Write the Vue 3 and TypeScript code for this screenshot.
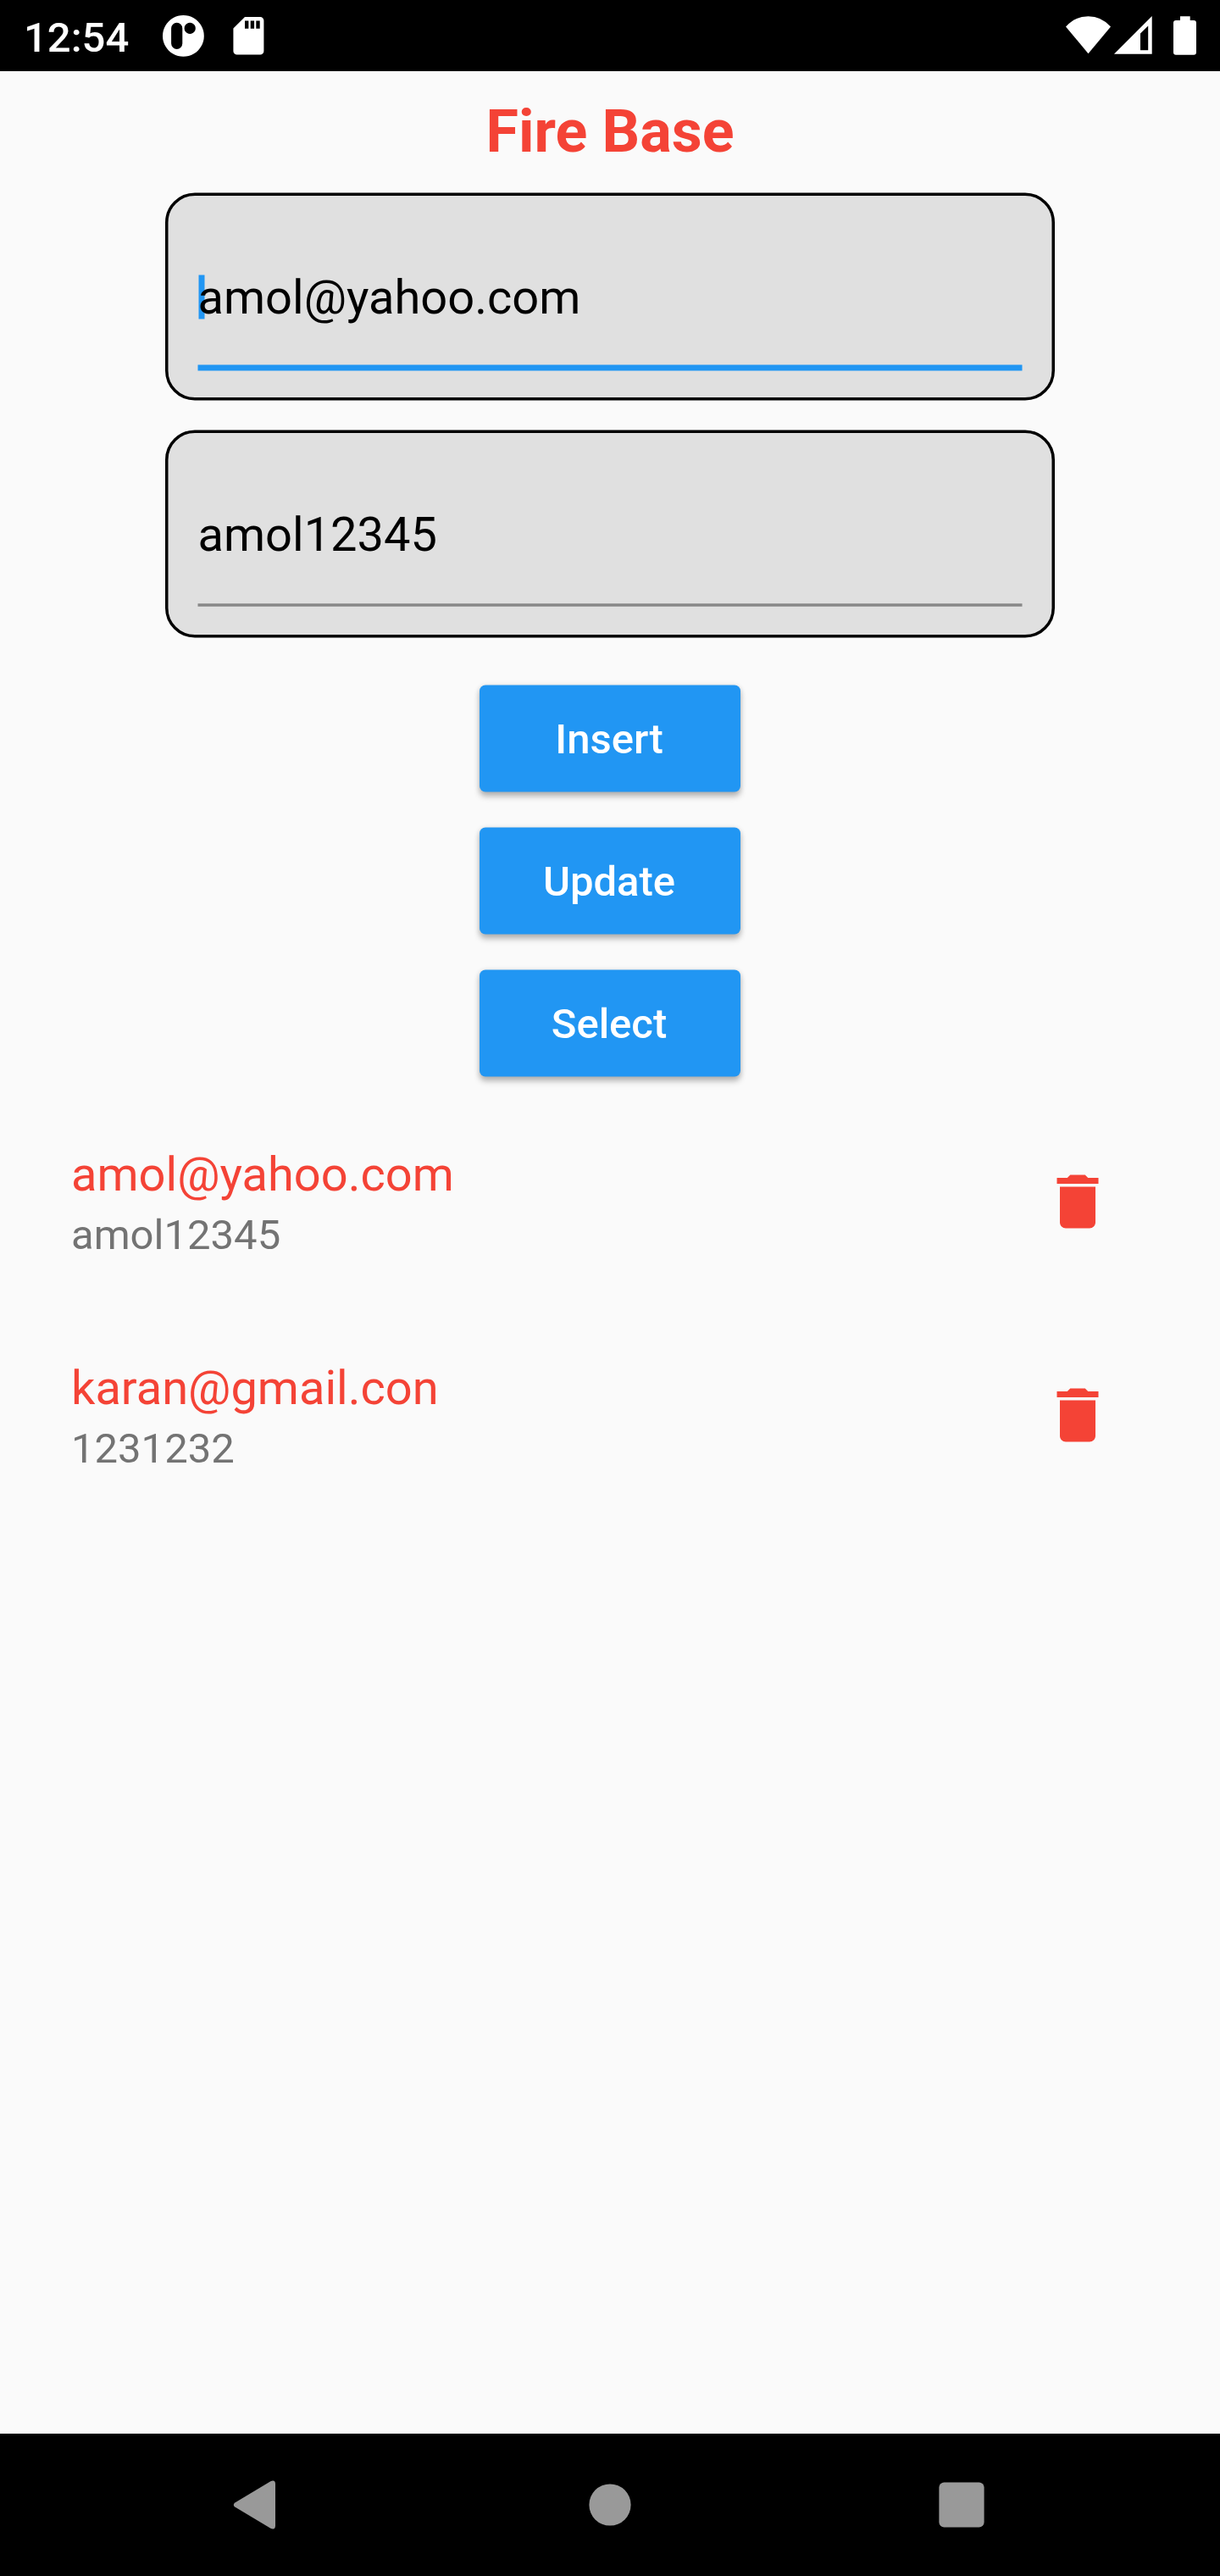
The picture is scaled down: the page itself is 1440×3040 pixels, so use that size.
<script setup lang="ts">
interface Field {
  value: string
  focused: boolean
}

interface Account {
  email: string
  password: string
}

const fields: Field[] = [
  { value: 'amol@yahoo.com', focused: true },
  { value: 'amol12345', focused: false },
]

const actions: string[] = ['Insert', 'Update', 'Select']

const accounts: Account[] = [
  { email: 'amol@yahoo.com', password: 'amol12345' },
  { email: 'karan@gmail.con', password: '1231232' },
]
</script>

<template>
  <div class="screen">
    <header class="status">
      <span class="clock">12:54</span>
      <svg class="status-left" viewBox="180 0 140 84" width="140" height="84" fill="#fff">
        <path
          fill-rule="evenodd"
          d="M216.4 18a24.4 24.4 0 1 0 .01 0zM208.7 26.8a6.6 6.6 0 0 1 6.6 6.6v17.9a6.6 6.6 0 0 1-13.2 0v-17.9a6.6 6.6 0 0 1 6.6-6.6zM224.2 26.8a6.6 6.6 0 1 1-.01 0z"
        />
        <path
          fill-rule="evenodd"
          d="M289 20h18.1a4.3 4.3 0 0 1 4.3 4.3v35.9a4.3 4.3 0 0 1-4.3 4.3h-27.4a4.3 4.3 0 0 1-4.3-4.3V33.6zM289 24.4v9.3h4.4v-9.3zM295.7 24.4v9.3h4.4v-9.3zM302.3 24.4v9.3h4.4v-9.3z"
        />
      </svg>
      <svg class="status-right" viewBox="1250 0 170 84" width="170" height="84" fill="#fff">
        <path d="M1284.5 63.3L1258 31.4Q1269 19.2 1284.5 19.2T1311 31.4z" />
        <path fill-rule="evenodd" d="M1315 63.7L1359.7 19v44.7zM1346 39.5V59.2h9.2V30.4z" />
        <path
          d="M1393 19.3h11.7V24h4.3a3 3 0 0 1 3 3v34.7a3 3 0 0 1-3 3h-21a3 3 0 0 1-3-3V27a3 3 0 0 1 3-3h5z"
        />
      </svg>
    </header>

    <main class="body">
      <h1 class="title">Fire Base</h1>

      <div class="fields">
        <div v-for="(field, i) in fields" :key="i" class="field">
          <svg class="frame" viewBox="0 0 1050 246" width="1050" height="246">
            <rect x="1.75" y="2.25" width="1046.5" height="241.5" rx="33.25" fill="#e0e0e0" stroke="#000" stroke-width="3.5" />
            <rect v-if="field.focused" x="38.5" y="203.5" width="973" height="7" fill="#2196f3" />
            <rect v-else x="38.5" y="205.25" width="973" height="3.5" fill="#888" />
            <rect v-if="field.focused" x="39.5" y="97.5" width="7" height="52" fill="#2196f3" />
          </svg>
          <span class="value">{{ field.value }}</span>
        </div>
      </div>

      <div class="actions">
        <button v-for="label in actions" :key="label" class="action" type="button">{{ label }}</button>
      </div>

      <ul class="list">
        <li v-for="account in accounts" :key="account.email" class="row">
          <div class="texts">
            <span class="email">{{ account.email }}</span>
            <span class="password">{{ account.password }}</span>
          </div>
          <svg class="trash" viewBox="0 0 24 24" width="84" height="84" fill="#f44336">
            <path d="M6 19c0 1.1.9 2 2 2h8c1.1 0 2-.9 2-2V7H6v12zM19 4h-3.5l-1-1h-5l-1 1H5v2h14V4z" />
          </svg>
        </li>
      </ul>
    </main>

    <footer class="nav">
      <svg viewBox="255 2872 100 168" width="100" height="168">
        <path
          fill="#999"
          d="M277.3 2953.4L319.4 2928.2Q325 2926 325 2931.5V2980.5Q325 2986 319.4 2983.8L277.3 2958.6Q274.2 2956 277.3 2953.4z"
        />
      </svg>
      <svg viewBox="670 2872 100 168" width="100" height="168">
        <circle cx="720" cy="2956" r="24.6" fill="#999" />
      </svg>
      <svg viewBox="1085 2872 100 168" width="100" height="168">
        <rect x="1108.4" y="2929.4" width="53.2" height="53.2" rx="6" fill="#999" />
      </svg>
    </footer>
  </div>
</template>

<style>
body {
  margin: 0;
  background: #fafafa;
}
</style>

<style scoped>
.screen {
  display: flex;
  flex-direction: column;
  width: 1440px;
  height: 3040px;
  background: #fafafa;
  font-family: Roboto, 'Liberation Sans', sans-serif;
  overflow: hidden;
}

.status {
  display: flex;
  flex: none;
  height: 84px;
  background: #000;
}

.clock {
  box-sizing: border-box;
  width: 180px;
  padding-left: 28px;
  padding-top: 3px;
  font-size: 49px;
  font-weight: 500;
  line-height: 84px;
  color: #fff;
  white-space: nowrap;
}

.status-right {
  margin-left: auto;
  margin-right: 20px;
}

.body {
  display: flex;
  flex: 1;
  flex-direction: column;
  align-items: center;
}

.title {
  margin: 30px 0 0;
  height: 82px;
  font-size: 70px;
  font-weight: 700;
  line-height: 82px;
  color: #f44336;
}

.fields {
  display: flex;
  flex-direction: column;
  gap: 34px;
  margin-top: 31px;
}

.field {
  display: grid;
  width: 1050px;
  height: 246px;
}

.frame,
.value {
  grid-area: 1 / 1;
}

.frame {
  display: block;
}

.value {
  z-index: 1;
  padding-left: 38.5px;
  padding-top: 91px;
  font-size: 56px;
  line-height: 66px;
  color: #000;
}

.actions {
  display: flex;
  flex-direction: column;
  gap: 42px;
  margin-top: 55px;
}

.action {
  position: relative;
  z-index: 0;
  box-sizing: border-box;
  width: 308px;
  height: 126px;
  padding: 3px 2px 0 0;
  border: 0;
  background: none;
  color: #fff;
  font-family: inherit;
  font-size: 49px;
  font-weight: 500;
  line-height: 57px;
}

.action::before {
  content: '';
  position: absolute;
  inset: 0;
  z-index: -1;
  border-radius: 7px;
  background: #2196f3;
  transform: translateY(0.5px);
  box-shadow:
    0 5px 7px rgba(0, 0, 0, 0.25),
    0 1px 6px rgba(0, 0, 0, 0.1);
}

.list {
  width: 1440px;
  margin: 22px 0 0;
  padding: 0;
  list-style: none;
}

.row {
  box-sizing: border-box;
  display: flex;
  align-items: flex-start;
  justify-content: space-between;
  height: 252px;
  padding: 61px 126px 0 84px;
}

.texts {
  display: flex;
  flex-direction: column;
}

.email {
  font-size: 56px;
  line-height: 66px;
  color: #f44336;
}

.password {
  margin-top: 10px;
  font-size: 49px;
  line-height: 57px;
  color: #737373;
}

.trash {
  margin-top: 23px;
}

.nav {
  display: flex;
  flex: none;
  box-sizing: border-box;
  justify-content: space-between;
  height: 168px;
  padding: 0 255px;
  background: #000;
}
</style>
